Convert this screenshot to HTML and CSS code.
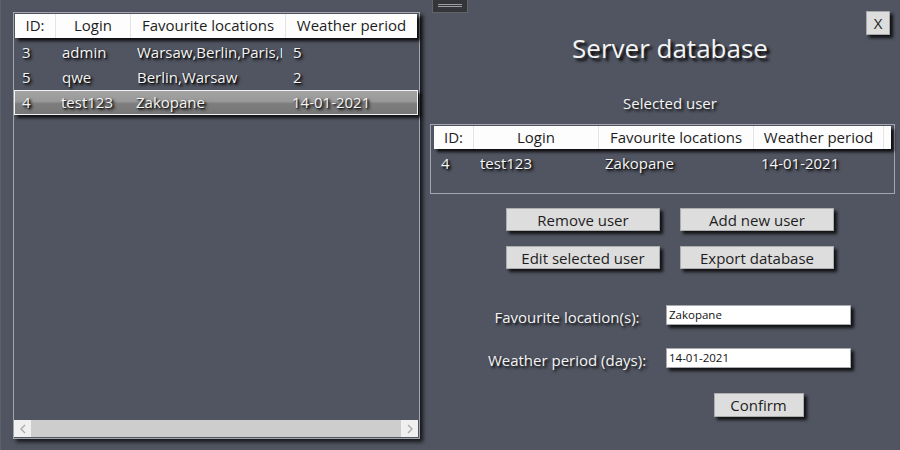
FILE: index.html
```html
<!DOCTYPE html>
<html>
<head>
<meta charset="utf-8">
<link rel="stylesheet" href="styles.css">
</head>
<body>
<div class="window">
  <div class="grip"><span></span><span></span></div>

  <section class="list-panel">
    <div class="head cols-main">
      <div>ID:</div><div>Login</div><div>Favourite locations</div><div>Weather period</div>
    </div>
    <div class="rows">
      <div class="row cols-main"><span>3</span><span>admin</span><span class="clip"><span>Warsaw,Berlin,Paris,Madrid</span></span><span>5</span></div>
      <div class="row cols-main"><span>5</span><span>qwe</span><span class="clip"><span>Berlin,Warsaw</span></span><span>2</span></div>
      <div class="row cols-main selected"><span>4</span><span>test123</span><span class="clip"><span>Zakopane</span></span><span>14-01-2021</span></div>
    </div>
    <div class="hscroll">
      <div class="arrow"><svg width="8" height="10" viewBox="0 0 8 10"><polyline points="6,1 2,5 6,9" fill="none" stroke="#a8a8a8" stroke-width="1.3"/></svg></div>
      <div class="track"></div>
      <div class="arrow"><svg width="8" height="10" viewBox="0 0 8 10"><polyline points="2,1 6,5 2,9" fill="none" stroke="#a8a8a8" stroke-width="1.3"/></svg></div>
    </div>
  </section>

  <section class="side">
    <button class="close">X</button>
    <div class="centered">
      <h1 class="title">Server database</h1>
      <div class="subtitle">Selected user</div>
    </div>
    <div class="user-panel">
      <div class="head cols-user">
        <div>ID:</div><div>Login</div><div>Favourite locations</div><div>Weather period</div><div></div>
      </div>
      <div class="row cols-user"><span>4</span><span>test123</span><span>Zakopane</span><span>14-01-2021</span><span></span></div>
    </div>
    <div class="centered">
      <div class="actions">
        <button class="btn">Remove user</button>
        <button class="btn">Add new user</button>
        <button class="btn">Edit selected user</button>
        <button class="btn">Export database</button>
      </div>
    </div>
    <div class="form">
      <label class="lbl">Favourite location(s):</label>
      <div class="input">Zakopane</div>
      <label class="lbl">Weather period (days):</label>
      <div class="input">14-01-2021</div>
      <button class="btn confirm">Confirm</button>
    </div>
  </section>
</div>
</body>
</html>
```

FILE: styles.css
```css
* { box-sizing: border-box; }
html, body { margin: 0; padding: 0; }
body {
  width: 900px;
  height: 450px;
  overflow: hidden;
  background: #515561;
  font-family: "Open Sans", "Noto Sans", sans-serif;
  font-size: 15px;
  color: #f4f4f4;
}
.window {
  position: relative;
  display: flex;
  align-items: flex-start;
  height: 450px;
  padding: 12px 0 0 12px;
  border-left: 1px solid #5c606b;
}
.grip {
  position: absolute;
  left: 431px;
  top: 0;
  width: 36px;
  height: 13px;
  background: #343538;
  border: 1px solid #62646a;
  border-top: none;
  display: flex;
  flex-direction: column;
  align-items: center;
  padding-top: 4px;
  gap: 1px;
}
.grip span {
  display: block;
  width: 24px;
  height: 1px;
  background: #9c9ea4;
}

/* left list */
.list-panel {
  width: 407px;
  height: 427px;
  border: 1px solid #a3a6ae;
  padding: 1px 0 0 1px;
  display: flex;
  flex-direction: column;
  box-shadow: 3px 3px 4px rgba(0,0,0,0.75);
}
.head {
  display: grid;
  background: #fdfdfd;
  color: #1d1d1d;
  box-shadow: 3px 3px 3px rgba(0,0,0,0.85);
  position: relative;
  z-index: 1;
}
.head > div {
  text-align: center;
  border-right: 1px solid #e4e4e4;
  white-space: nowrap;
  overflow: hidden;
}
.head > div:last-child { border-right: none; }
.list-panel .head { height: 24px; line-height: 23px; width: 402px; }
.cols-main { grid-template-columns: 41px 75px 155px 131px; }
.rows {
  flex: 1;
  padding-top: 2px;
}
.row {
  display: grid;
  height: 25px;
  line-height: 24px;
  text-shadow: 2px 2px 3px #000, 1px 1px 1px rgba(0,0,0,0.6);
  white-space: nowrap;
}
.row > span { padding-left: 7px; overflow: hidden; }
.row > span:nth-child(2), .row > span:nth-child(3) { padding-left: 6px; }
.clip > span {
  display: block;
  width: 145px;
  overflow: hidden;
}
.list-panel .row { width: 404px; margin-left: -1px; padding-left: 1px; }
.row.selected {
  background: linear-gradient(#a3a3a3 0%, #999 45%, #7d7d7d 55%, #777 100%);
  border: 1px solid #f2f2f2;
  padding-left: 0;
  line-height: 22px;
  box-shadow: 3px 3px 3px rgba(0,0,0,0.8);
}
.row.selected > span:first-child { padding-left: 7px; }
.row.selected > span:nth-child(2), .row.selected > span:nth-child(3) { padding-left: 5px; }
.row.selected > span:nth-child(4) { padding-left: 6px; }
.hscroll {
  height: 17px;
  width: 404px;
  display: flex;
  background: #cdcdcd;
  margin-left: -1px;
  margin-bottom: 1px;
}
.hscroll .arrow {
  width: 17px;
  background: #f0f0f0;
  display: flex;
  align-items: center;
  justify-content: center;
}
.hscroll .track { flex: 1; }

/* right side */
.side {
  position: relative;
  width: 465px;
  margin-left: 10px;
}
.close {
  position: absolute;
  right: 5px;
  top: -1px;
  width: 24px;
  height: 24px;
  padding: 0;
  background: #dddddd;
  border: 1px solid #a9a9a9;
  font-family: "Open Sans", sans-serif;
  font-size: 15px;
  color: #1d1d1d;
  line-height: 20px;
  box-shadow: 3px 3px 3px rgba(0,0,0,0.8);
}
.centered {
  padding-left: 15px;
  display: flex;
  flex-direction: column;
  align-items: center;
}
.title {
  margin: 18px 0 0;
  font-size: 26px;
  font-weight: normal;
  line-height: 36px;
  text-shadow: 3px 3px 3px #000;
}
.subtitle {
  margin-top: 27px;
  line-height: 20px;
  text-shadow: 2px 2px 3px #000;
}
.user-panel {
  margin-top: 11px;
  height: 70px;
  border: 1px solid #a3a6ae;
  padding: 1px 2px 0 3px;
}
.cols-user { grid-template-columns: 40px 125px 155px 130px 7px; }
.user-panel .head { height: 23px; line-height: 22px; width: 457px; }
.user-panel .row { margin-top: 2px; line-height: 25px; }
.user-panel .row > span:first-child { padding-left: 7px; }
.actions {
  margin-top: 14px;
  display: grid;
  grid-template-columns: 154px 154px;
  column-gap: 20px;
  row-gap: 15px;
}
.btn {
  height: 23px;
  padding: 0;
  background: #dddddd;
  border: 1px solid #adadad;
  font-family: "Open Sans", sans-serif;
  font-size: 15px;
  color: #1d1d1d;
  line-height: 20px;
  box-shadow: 3px 3px 3px rgba(0,0,0,0.8);
}
.form {
  margin: 36px 0 0 38px;
  display: grid;
  grid-template-columns: 198px 185px;
  grid-template-rows: 20px 20px auto;
  row-gap: 23px;
  align-items: center;
}
.lbl {
  text-align: center;
  padding-top: 4px;
  line-height: 20px;
  text-shadow: 2px 2px 3px #000;
  white-space: nowrap;
}
.input {
  height: 20px;
  background: #ffffff;
  border: 1px solid #a9abb0;
  color: #111;
  font-family: "Open Sans", sans-serif;
  font-size: 11.5px;
  line-height: 17px;
  padding-left: 2px;
  box-shadow: 3px 3px 3px rgba(0,0,0,0.8);
}
.confirm {
  grid-column: 2;
  justify-self: center;
  width: 90px;
  height: 24px;
  margin-top: 2px;
}
```
